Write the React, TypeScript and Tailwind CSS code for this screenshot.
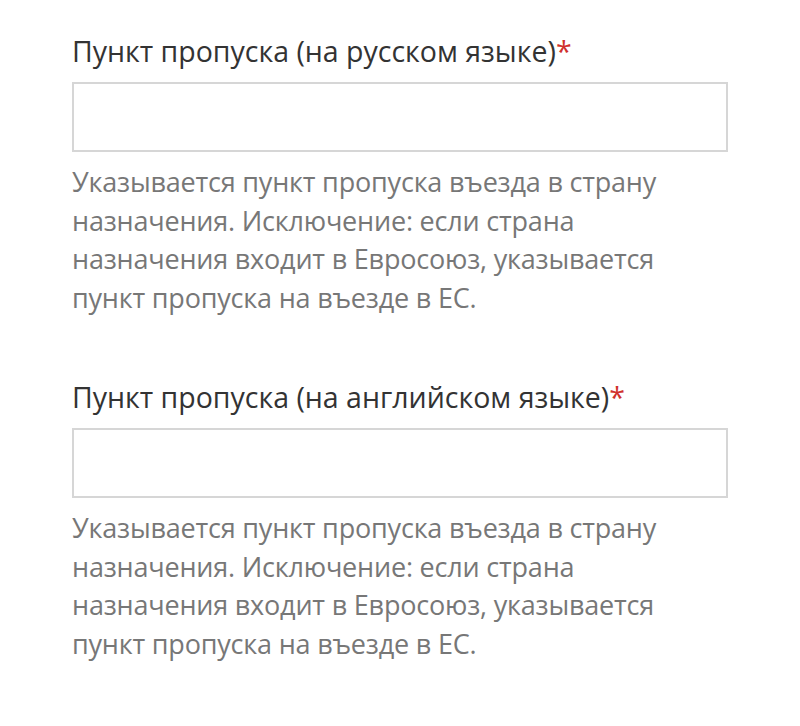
import React from "react";

const help =
  "Указывается пункт пропуска въезда в страну назначения. Исключение: если страна назначения входит в Евросоюз, указывается пункт пропуска на въезде в ЕС.";

function Field({ label }: { label: string }) {
  return (
    <div className="flex flex-col">
      <label className="text-[28.5px] leading-[38px] text-[#333333]">
        {label}
        <span className="text-[#d0312d]">*</span>
      </label>
      <div className="mt-[12px] h-[70px] w-[656px] border-2 border-[#d6d6d6] bg-white" />
      <p className="mt-[11px] w-[656px] text-[27px] leading-[38.7px] tracking-[-0.2px] text-[#777777]">
        {help}
      </p>
    </div>
  );
}

export default function App() {
  return (
    <div
      className="min-h-[726px] w-[800px] bg-white pl-[72px] pt-[32px]"
      style={{ fontFamily: '"Open Sans", sans-serif' }}
    >
      <div className="flex flex-col gap-[60px]">
        <Field label="Пункт пропуска (на русском языке)" />
        <Field label="Пункт пропуска (на английском языке)" />
      </div>
    </div>
  );
}
